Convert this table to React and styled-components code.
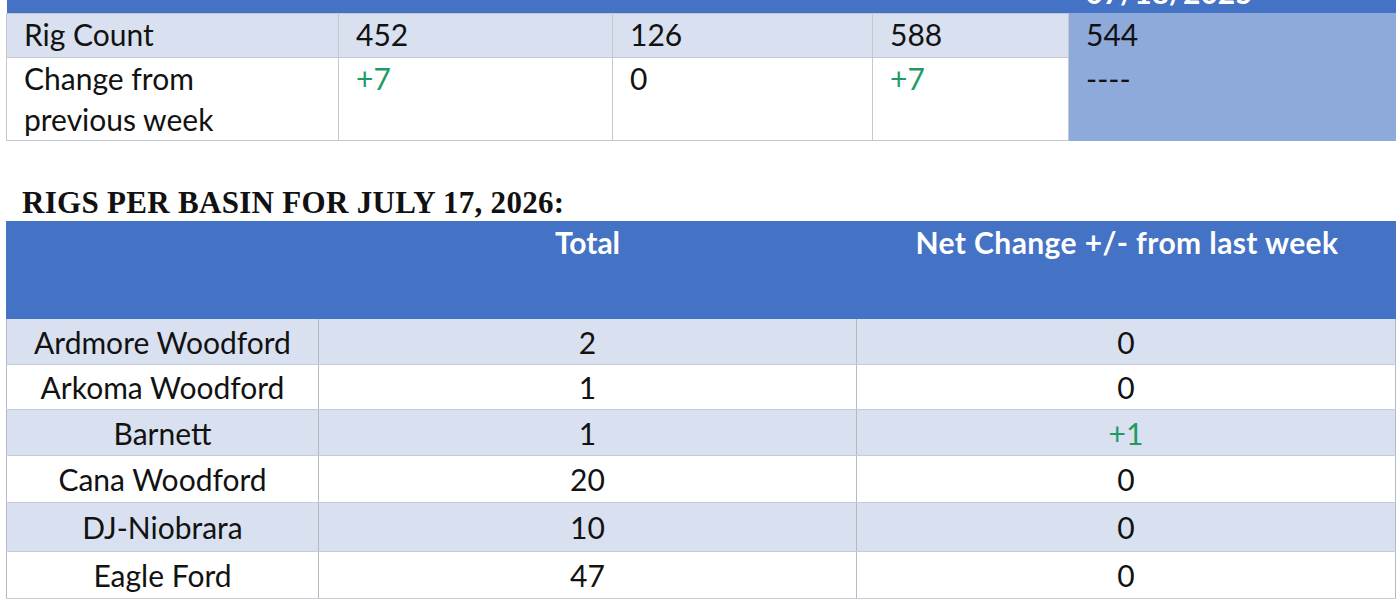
import styled, { createGlobalStyle } from "styled-components"

const GlobalStyle = createGlobalStyle`
    html, body {
        margin: 0;
        padding: 0;
        background: #ffffff;
        overflow: hidden;
    }
    body {
        font-family: Lato, "Open Sans", sans-serif;
        color: #111111;
    }
`

const summary = [
    { label: ["Rig Count"], values: ["452", "126", "588"], last: "544" },
    { label: ["Change from", "previous week"], values: ["+7", "0", "+7"], last: "----" },
]

const basins = [
    { name: "Ardmore Woodford", total: "2", change: "0", h: 46 },
    { name: "Arkoma Woodford", total: "1", change: "0", h: 45 },
    { name: "Barnett", total: "1", change: "+1", h: 46 },
    { name: "Cana Woodford", total: "20", change: "0", h: 47 },
    { name: "DJ-Niobrara", total: "10", change: "0", h: 49 },
    { name: "Eagle Ford", total: "47", change: "0", h: 47 },
]

const isUp = (v) => v.startsWith("+")

export default function App () {
    return (
        <>
            <GlobalStyle />
            <Page>
                <Table>
                    <colgroup>
                        <col style={{ width: 332 }} />
                        <col style={{ width: 274 }} />
                        <col style={{ width: 260 }} />
                        <col style={{ width: 196 }} />
                        <col style={{ width: 327 }} />
                    </colgroup>
                    <tbody>
                        <tr>
                            <HeadStrip colSpan={4} />
                            <HeadStrip><StripText>07/18/2025</StripText></HeadStrip>
                        </tr>
                        {summary.map((row, i) => (
                            <tr key={row.label[0]}>
                                <SumCell shaded={i === 0} height={i === 0 ? 44 : 83}>
                                    {row.label.map((line, k) => <Line key={k}>{line}</Line>)}
                                </SumCell>
                                {row.values.map((v, j) => (
                                    <SumCell key={j} shaded={i === 0} up={isUp(v)}>{v}</SumCell>
                                ))}
                                <LastCell>{row.last}</LastCell>
                            </tr>
                        ))}
                    </tbody>
                </Table>

                <Heading>RIGS PER BASIN FOR JULY 17, 2026:</Heading>

                <Table>
                    <colgroup>
                        <col style={{ width: 312 }} />
                        <col style={{ width: 538 }} />
                        <col style={{ width: 539 }} />
                    </colgroup>
                    <thead>
                        <tr>
                            <HeadCell></HeadCell>
                            <HeadCell>Total</HeadCell>
                            <HeadCell>Net Change +/- from last week</HeadCell>
                        </tr>
                    </thead>
                    <tbody>
                        {basins.map((b, i) => (
                            <tr key={b.name}>
                                <BasinCell shaded={i % 2 === 0} height={b.h}>{b.name}</BasinCell>
                                <BasinCell shaded={i % 2 === 0} height={b.h}>{b.total}</BasinCell>
                                <BasinCell shaded={i % 2 === 0} height={b.h} up={isUp(b.change)}>{b.change}</BasinCell>
                            </tr>
                        ))}
                    </tbody>
                </Table>
            </Page>
        </>
    )
}

const Page = styled.div`
    width: 1400px;
    height: 600px;
    padding: 0 5px 0 6px;
    box-sizing: border-box;
    overflow: hidden;
`
const Table = styled.table`
    width: 1389px;
    border-collapse: collapse;
    table-layout: fixed;
    font-size: 30px;
`
const HeadStrip = styled.td`
    height: 13px;
    padding: 0;
    background: #4472c4;
    position: relative;
    overflow: hidden;
`
const StripText = styled.span`
    position: absolute;
    left: 17px;
    bottom: 6px;
    color: #ffffff;
    font-weight: 700;
    line-height: 1;
`
const Line = styled.div`
    white-space: nowrap;
`
const SumCell = styled.td`
    height: ${props => props.height ? props.height + "px" : "auto"};
    padding: 0 16px 0 17px;
    vertical-align: top;
    line-height: 41px;
    box-sizing: border-box;
    background: ${props => props.shaded ? "#d9e0ef" : "#ffffff"};
    color: ${props => props.up ? "#1f9a66" : "#121212"};
    border: 1px solid #c4c8d0;
`
const LastCell = styled.td`
    padding: 0 16px 0 17px;
    vertical-align: top;
    line-height: 41px;
    background: #8eaadb;
    color: #121212;
    border: 1px solid #8eaadb;
    border-left: 1px solid #c4c8d0;
`
const Heading = styled.h2`
    margin: 46px 0 2px 16px;
    font-family: "Liberation Serif", serif;
    font-weight: 700;
    font-size: 31px;
    line-height: 32px;
    letter-spacing: 0.3px;
    white-space: nowrap;
    color: #111111;
`
const HeadCell = styled.th`
    height: 97px;
    box-sizing: border-box;
    padding: 0;
    vertical-align: top;
    text-align: center;
    background: #4472c4;
    color: #ffffff;
    font-weight: 700;
    line-height: 41px;
    border: 1px solid #4472c4;
    &:nth-child(3) { padding-left: 2px; letter-spacing: 0.4px; }
`
const BasinCell = styled.td`
    height: ${props => props.height}px;
    box-sizing: border-box;
    padding: 0;
    text-align: center;
    line-height: 44px;
    background: ${props => props.shaded ? "#d9e0ef" : "#ffffff"};
    color: ${props => props.up ? "#1f9a66" : "#121212"};
    border-top: 1px solid #c3cbdc;
    border-bottom: 1px solid #c3cbdc;
    border-left: 1px solid #b3bac6;
    border-right: 1px solid #b3bac6;
`
